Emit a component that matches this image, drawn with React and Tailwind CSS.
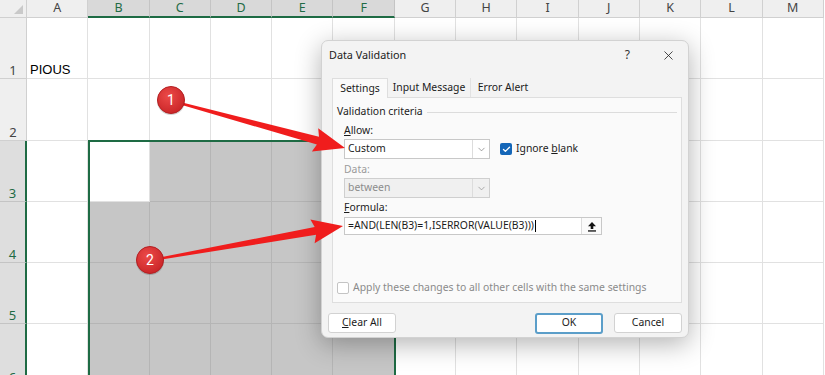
import React from 'react';
import { X, ChevronDown, Check } from 'lucide-react';

const cols = ['A', 'B', 'C', 'D', 'E', 'F', 'G', 'H', 'I', 'J', 'K', 'L', 'M'];
const rows = [1, 2, 3, 4, 5, 6];

const isGray = (r, c) => c >= 1 && c <= 5 && r >= 3 && !(r === 3 && c === 1);

function arrowPoints(x0, y0, x1, y1, w0, w1, headLen, headHalf) {
  const dx = x1 - x0;
  const dy = y1 - y0;
  const len = Math.hypot(dx, dy);
  const ux = dx / len;
  const uy = dy / len;
  const nx = -uy;
  const ny = ux;
  const bx = x1 - ux * headLen;
  const by = y1 - uy * headLen;
  const pts = [
    [x0 + (nx * w0) / 2, y0 + (ny * w0) / 2],
    [bx + (nx * w1) / 2, by + (ny * w1) / 2],
    [bx - ux * 3 + nx * headHalf, by - uy * 3 + ny * headHalf],
    [x1, y1],
    [bx - ux * 3 - nx * headHalf, by - uy * 3 - ny * headHalf],
    [bx - (nx * w1) / 2, by - (ny * w1) / 2],
    [x0 - (nx * w0) / 2, y0 - (ny * w0) / 2],
  ];
  return pts.map((p) => p.map((v) => v.toFixed(1)).join(',')).join(' ');
}

const Badge = ({ cx, cy, n }) => (
  <g>
    <circle cx={cx} cy={cy + 1} r="14" fill="rgba(0,0,0,0.18)" />
    <circle cx={cx} cy={cy} r="13.5" fill="url(#badge)" stroke="#b51f22" strokeWidth="1" />
    <text x={cx} y={cy + 5} textAnchor="middle" fontSize="14" fill="#fff" fontFamily="Roboto, sans-serif">
      {n}
    </text>
  </g>
);

const Arrows = () => (
  <svg className="absolute left-0 top-0 w-[825px] h-[375px] pointer-events-none" viewBox="0 0 825 375">
    <defs>
      <radialGradient id="badge" cx="0.4" cy="0.35" r="0.7">
        <stop offset="0" stopColor="#ec4a48" />
        <stop offset="1" stopColor="#c92427" />
      </radialGradient>
    </defs>
    <polygon points={arrowPoints(172, 101, 345, 148, 2, 8, 28, 12)} fill="#f01d1d" />
    <polygon points={arrowPoints(152, 260, 343, 226, 2, 8, 28, 12)} fill="#f01d1d" />
    <Badge cx={171} cy={100} n="1" />
    <Badge cx={150} cy={260} n="2" />
  </svg>
);

const UploadIcon = () => (
  <svg width="10" height="11" viewBox="0 0 10 11">
    <path d="M5 1 L9 5.2 H6.3 V8 H3.7 V5.2 H1 Z" fill="#111" />
    <rect x="1" y="9.3" width="8" height="1.3" fill="#111" />
  </svg>
);

const Sheet = () => (
  <div className="grid grid-cols-[27px_repeat(13,61.3px)] grid-rows-[18px_repeat(6,61.3px)] font-['Noto_Sans',sans-serif]">
    <div className="bg-[#efefef] border-r border-b border-[#d0d0d0] relative">
      <div className="absolute right-[3px] bottom-[3px] w-0 h-0 border-l-[9px] border-l-transparent border-b-[9px] border-b-[#c9c9c9]" />
    </div>
    {cols.map((c, i) => {
      const sel = i >= 1 && i <= 5;
      return (
        <div
          key={c}
          className={
            sel
              ? 'flex items-center justify-center text-[12.5px] bg-[#d9d9d9] text-[#1f6b45] border-r border-r-[#c4c4c4] border-b-2 border-b-[#1e6b44]'
              : 'flex items-center justify-center text-[12.5px] bg-[#efefef] text-[#444] border-r border-b border-[#d0d0d0]'
          }
        >
          {c}
        </div>
      );
    })}
    {rows.map((r) => {
      const selRow = r >= 3;
      return (
        <React.Fragment key={r}>
          <div
            className={
              selRow
                ? 'flex items-end justify-center pb-[1px] leading-none text-[13px] bg-[#dedede] text-[#1f6b45] border-b border-b-[#c4c4c4] border-r-2 border-r-[#1e6b44]'
                : 'flex items-end justify-center pb-[1px] leading-none text-[13px] bg-[#efefef] text-[#444] border-r border-b border-[#d0d0d0]'
            }
          >
            {r}
          </div>
          {cols.map((c, i) =>
            isGray(r, i) ? (
              <div key={c} className="bg-[#c6c6c6] border-r border-b border-[#b5b5b5]" />
            ) : (
              <div key={c} className="bg-white border-r border-b border-[#e1e1e1] flex items-end pl-[3px] pb-[2px]">
                {r === 1 && i === 0 && (
                  <span className="font-['Liberation_Sans',sans-serif] text-[13px] text-black leading-none">PIOUS</span>
                )}
              </div>
            )
          )}
        </React.Fragment>
      );
    })}
  </div>
);

const Dialog = () => (
  <div className="absolute left-[321px] top-[40px] w-[368px] h-[298px] rounded-[7px] bg-[#f3f3f3] border border-[#d2d2d2] shadow-[0_6px_26px_rgba(0,0,0,0.3)] font-['Noto_Sans',sans-serif] text-[10.4px] text-[#1b1b1b] flex flex-col">
    <div className="h-[28px] flex items-center pl-[7px] pr-[12px]">
      <span className="text-[10.8px]">Data Validation</span>
      <span className="ml-auto mr-[31px] text-[12px] text-[#333]">?</span>
      <X size={15} strokeWidth={1.3} className="text-[#222]" />
    </div>
    <div className="mt-[9px] ml-[10px] flex h-[19px] relative z-10">
      <div className="w-[56px] h-[20px] bg-[#fafafa] border border-b-0 border-[#dedede] flex items-center justify-center">Settings</div>
      <div className="w-[83px] flex items-center justify-center border-r border-[#e2e2e2]">Input Message</div>
      <div className="w-[64px] flex items-center justify-center">Error Alert</div>
    </div>
    <div className="ml-[10px] w-[350px] h-[206px] bg-[#fafafa] border border-[#dedede] flex flex-col">
      <div className="mt-[7px] pl-[4px] flex items-center h-[14px]">
        <span>Validation criteria</span>
        <div className="flex-1 h-px bg-[#dcdcdc] ml-[4px] mr-[4px]" />
      </div>
      <div className="mt-[5px] pl-[11px] h-[14px] flex items-center">
        <span><span className="underline">A</span>llow:</span>
      </div>
      <div className="mt-[1px] pl-[11px] flex items-center h-[20px]">
        <div className="w-[146px] h-[20px] bg-white border border-[#c8c8c8] flex items-center">
          <span className="pl-[3px] flex-1">Custom</span>
          <div className="w-[17px] h-full border-l border-[#dcdcdc] flex items-center justify-center">
            <ChevronDown size={11} strokeWidth={1.5} className="text-[#777]" />
          </div>
        </div>
        <div className="ml-[10px] w-[12px] h-[12px] rounded-[2px] bg-[#1466b8] flex items-center justify-center">
          <Check size={9} strokeWidth={3.5} className="text-white" />
        </div>
        <span className="ml-[4px]">Ignore <span className="underline">b</span>lank</span>
      </div>
      <div className="mt-[4px] pl-[11px] h-[14px] flex items-center text-[#9a9a9a]">Data:</div>
      <div className="mt-[1px] pl-[11px] h-[20px] flex">
        <div className="w-[146px] h-[20px] bg-[#f0f0f0] border border-[#cfcfcf] flex items-center text-[#8c8c8c]">
          <span className="pl-[3px] flex-1">between</span>
          <div className="w-[17px] h-full border-l border-[#dcdcdc] flex items-center justify-center">
            <ChevronDown size={11} strokeWidth={1.5} className="text-[#8a8a8a]" />
          </div>
        </div>
      </div>
      <div className="mt-[3px] pl-[11px] h-[14px] flex items-center">
        <span><span className="underline">F</span>ormula:</span>
      </div>
      <div className="mt-[2px] pl-[11px] h-[18px] flex">
        <div className="w-[258px] h-[18px] bg-white border border-[#c8c8c8] flex items-center">
          <span className="pl-[3px] flex-1">=AND(LEN(B3)=1,ISERROR(VALUE(B3)))<span className="inline-block w-px h-[12px] bg-black align-middle ml-px" /></span>
          <div className="w-[20px] h-full border-l border-[#dcdcdc] bg-[#fafafa] flex items-center justify-center">
            <UploadIcon />
          </div>
        </div>
      </div>
      <div className="mt-[46px] pl-[4px] h-[14px] flex items-center text-[#8a8a8a]">
        <div className="w-[12px] h-[12px] rounded-[2px] border border-[#c4c4c4] bg-white" />
        <span className="ml-[4px]">Apply these changes to all other cells with the same settings</span>
      </div>
    </div>
    <div className="mt-[10px] px-[6px] flex items-center h-[20px]">
      <div className="w-[68px] h-[20px] bg-white border border-[#d2d2d2] rounded-[3px] flex items-center justify-center">
        <span><span className="underline">C</span>lear All</span>
      </div>
      <div className="ml-auto w-[68px] h-[21px] bg-white border-2 border-[#5b9ec9] rounded-[3px] flex items-center justify-center">OK</div>
      <div className="ml-[11px] w-[68px] h-[20px] bg-white border border-[#d2d2d2] rounded-[3px] flex items-center justify-center">Cancel</div>
    </div>
  </div>
);

export default function App() {
  return (
    <div className="relative w-[825px] h-[375px] overflow-hidden bg-white">
      <Sheet />
      <div className="absolute left-[88px] top-[140px] w-[308px] h-[260px] border-2 border-[#1e6b44] pointer-events-none" />
      <Dialog />
      <Arrows />
    </div>
  );
}
